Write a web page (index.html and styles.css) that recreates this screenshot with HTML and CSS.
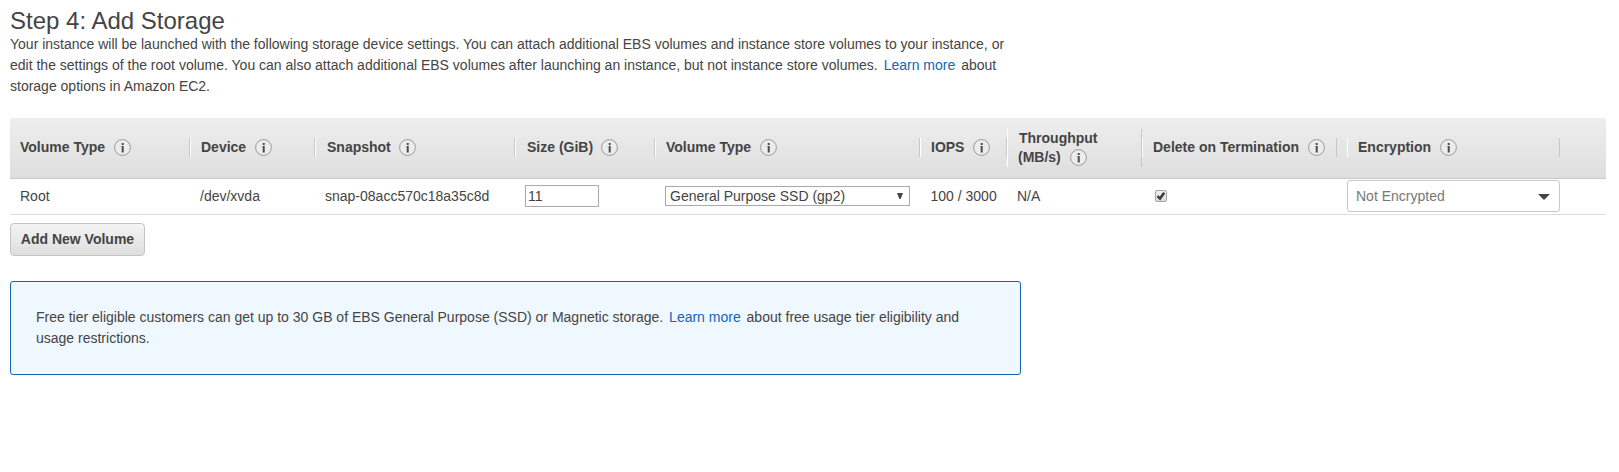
FILE: index.html
```html
<!DOCTYPE html>
<html lang="en">
<head>
<meta charset="utf-8">
<title>Step 4: Add Storage</title>
<link rel="stylesheet" href="styles.css">
</head>
<body>
<svg class="defs" width="0" height="0" aria-hidden="true">
  <symbol id="info" viewBox="0 0 17 17">
    <circle cx="8.5" cy="8.5" r="7.9" fill="#ececec" stroke="#999"/>
    <path d="M7.7 4h2v2h-2zM7.7 7h2v6.5h-2z" fill="#4a4a4a"/>
    <path d="M6.7 7h1v1h-1z" fill="#999"/>
  </symbol>
</svg>
<main class="page">
  <h1 class="title">Step 4: Add Storage</h1>
  <p class="intro">Your instance will be launched with the following storage device settings. You can attach additional EBS volumes and instance store volumes to your instance, or<br>edit the settings of the root volume. You can also attach additional EBS volumes after launching an instance, but not instance store volumes. <a class="link" href="#">Learn more</a> about<br>storage options in Amazon EC2.</p>

  <section class="table">
    <div class="row head">
      <div class="th first"><span>Volume Type</span><svg class="info"><use href="#info"/></svg></div>
      <div class="th"><span>Device</span><svg class="info"><use href="#info"/></svg></div>
      <div class="th wide"><span>Snapshot</span><svg class="info"><use href="#info"/></svg></div>
      <div class="th wide"><span>Size (GiB)</span><svg class="info"><use href="#info"/></svg></div>
      <div class="th"><span>Volume Type</span><svg class="info"><use href="#info"/></svg></div>
      <div class="th"><span>IOPS</span><svg class="info"><use href="#info"/></svg></div>
      <div class="th tall"><span class="first-line">Throughput</span><div class="line"><span>(MB/s)</span><svg class="info"><use href="#info"/></svg></div></div>
      <div class="th delete"><span>Delete on Termination</span><svg class="info"><use href="#info"/></svg></div>
      <div class="th"><span>Encryption</span><svg class="info"><use href="#info"/></svg></div>
    </div>
    <div class="row body">
      <div class="td">Root</div>
      <div class="td">/dev/xvda</div>
      <div class="td">snap-08acc570c18a35c8d</div>
      <div class="td"><input class="size" type="text" value="11"></div>
      <div class="td"><div class="select"><span>General Purpose SSD (gp2)</span><svg class="arrow" viewBox="0 0 6 6"><path d="M0 0h6L3.6 6H2.4z"/></svg></div></div>
      <div class="td iops">100 / 3000</div>
      <div class="td">N/A</div>
      <div class="td"><div class="check"><svg viewBox="0 0 10 10"><path d="M1.5 5.2L4 7.6L8.2 1.8" fill="none" stroke="#3c3c3c" stroke-width="2.5"/></svg></div></div>
      <div class="td flush"><div class="dropdown"><span>Not Encrypted</span><svg class="caret" viewBox="0 0 12 6"><path d="M0 0h12L6 6z"/></svg></div></div>
    </div>
  </section>

  <button class="add" type="button">Add New Volume</button>

  <aside class="notice">Free tier eligible customers can get up to 30 GB of EBS General Purpose (SSD) or Magnetic storage. <a class="link" href="#">Learn more</a> about free usage tier eligibility and<br>usage restrictions.</aside>
</main>
</body>
</html>
```

FILE: styles.css
```css
* { box-sizing: border-box; }
body {
  margin: 0;
  background: #fff;
  color: #444;
  font: 14px/21px "Liberation Sans", Arial, sans-serif;
}
.defs { display: block; }
.page { width: 1606px; padding: 8px 0 0 10px; }
.title { margin: 0; font-size: 24px; font-weight: normal; line-height: 26px; }
.intro { margin: 0; white-space: nowrap; }
.link { color: #1166bb; text-decoration: none; margin: 0 2px; }

.table { margin-top: 21px; }
.row {
  display: grid;
  grid-template-columns: 180px 125px 200px 140px 265px 87px 135px 205px 213px;
  align-items: center;
}
.head {
  height: 61px;
  background: linear-gradient(#eee, #dedede);
  border-bottom: 1px solid #c8c8c8;
  font-weight: bold;
  line-height: 19px;
}
.th {
  display: flex;
  align-items: center;
  gap: 9px;
  height: 19px;
  margin-bottom: 1px;
  padding-left: 10px;
  border-left: 1px solid #fff;
  border-right: 1px solid #c8c8c8;
  white-space: nowrap;
}
.th.first { border-left: 0; }
.th.wide { padding-left: 11px; gap: 8px; }
.th.tall {
  height: 38px;
  margin-bottom: 0;
  flex-direction: column;
  align-items: flex-start;
  gap: 0;
}
.first-line { padding-left: 1px; }
.line { display: flex; align-items: center; gap: 9px; height: 19px; }
.th.delete { width: 195px; }
.info { width: 17px; height: 17px; flex: none; }

.body { height: 36px; border-bottom: 1px solid #ddd; }
.td { display: flex; align-items: center; padding-left: 10px; white-space: nowrap; }
.td.iops { padding-left: 10.5px; }
.td.flush { padding-left: 0; }
.size {
  width: 74px;
  height: 22px;
  margin-bottom: 1px;
  padding: 0 2px;
  border: 1px solid #a9a9a9;
  border-radius: 0;
  color: #444;
  font: inherit;
}
.select {
  display: flex;
  align-items: center;
  justify-content: space-between;
  width: 245px;
  height: 20px;
  margin-bottom: 1px;
  padding: 0 6px 0 4px;
  border: 1px solid #a9a9a9;
}
.arrow { width: 6px; height: 6px; margin-bottom: 1px; fill: #444; }
.check {
  width: 12px;
  height: 12px;
  margin: 0 0 1px 3px;
  border: 1px solid #a6a6a6;
  border-radius: 2px;
  background: linear-gradient(#eee, #ddd);
}
.check svg { display: block; width: 10px; height: 10px; }
.dropdown {
  display: flex;
  align-items: center;
  justify-content: space-between;
  width: 213px;
  height: 32px;
  margin-bottom: 1px;
  padding: 1px 9px 0 8px;
  border: 1px solid #c8c8c8;
  border-radius: 3px;
  color: #777;
}
.caret { width: 12px; height: 6px; fill: #444; }

.add {
  display: block;
  width: 135px;
  height: 33px;
  margin-top: 8px;
  padding: 0;
  border: 1px solid #c4c4c4;
  border-radius: 4px;
  background: linear-gradient(#f4f4f4, #dedede);
  color: #444;
  font: bold 14px/21px "Liberation Sans", Arial, sans-serif;
}
.notice {
  width: 1011px;
  height: 94px;
  margin-top: 25px;
  padding: 25px;
  border: 1px solid #1166bb;
  border-radius: 3px;
  background: #f0f8ff;
  white-space: nowrap;
}
```
